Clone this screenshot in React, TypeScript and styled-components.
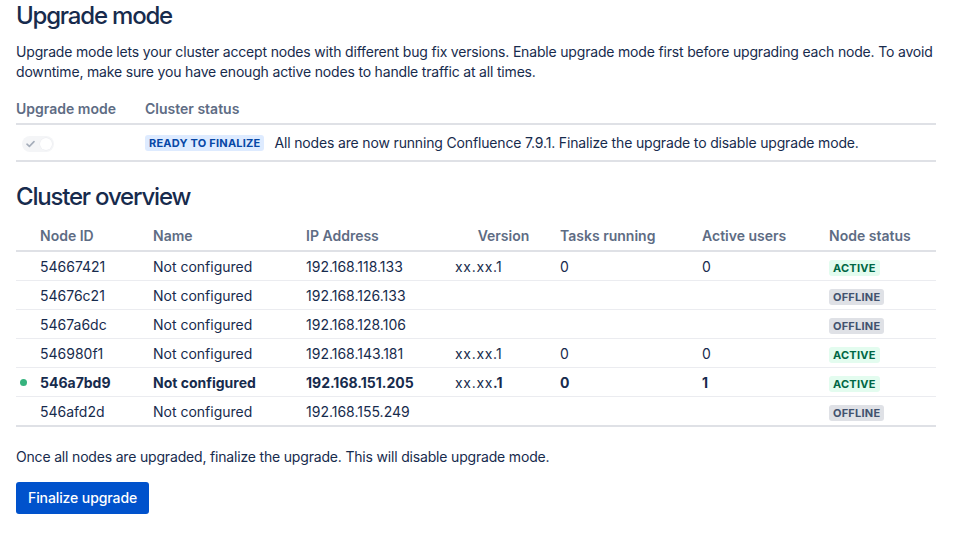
import React from "react";
import styled, { createGlobalStyle } from "styled-components";

const GlobalStyle = createGlobalStyle`
  html, body { margin: 0; padding: 0; background: #ffffff; }
  body {
    font-family: Inter, "Noto Sans", "Liberation Sans", sans-serif;
    color: #172B4D;
    font-size: 14px;
    line-height: 20px;
    -webkit-font-smoothing: antialiased;
  }
`;

const Page = styled.div`
  padding: 2px 16px 0 16px;
`;

const Heading = styled.h1<{ $top?: number }>`
  margin: ${(p) => p.$top ?? 0}px 0 0 0;
  font-size: 24px;
  line-height: 28px;
  font-weight: 500;
  color: #172B4D;
  letter-spacing: -1.2px;
`;

const Paragraph = styled.p<{ $top: number }>`
  margin: ${(p) => p.$top}px 0 0 0;
  font-size: 14px;
  line-height: 20px;
  letter-spacing: -0.18px;
`;

const ModeTable = styled.div`
  width: 920px;
  margin-top: 13px;
  border-bottom: 2px solid #DFE1E6;
`;

const ModeRow = styled.div<{ $head?: boolean }>`
  display: grid;
  grid-template-columns: 129px 1fr;
  align-items: center;
  padding: ${(p) => (p.$head ? "4px 0 4px" : "8px 0 7px")};
  border-bottom: ${(p) => (p.$head ? "2px solid #DFE1E6" : "none")};
`;

const HeadCell = styled.div<{ $align?: string; $pl?: number }>`
  font-weight: 600;
  color: #5E6C84;
  text-align: ${(p) => p.$align ?? "left"};
  padding-left: ${(p) => p.$pl ?? 0}px;
  white-space: nowrap;
`;

const StatusCell = styled.div`
  display: flex;
  align-items: center;
  gap: 10px;
  white-space: nowrap;
`;

const StatusText = styled.span`
  letter-spacing: -0.16px;
`;

const Toggle = styled.span`
  position: relative;
  display: inline-flex;
  align-items: center;
  width: 32px;
  height: 16px;
  margin-left: 6px;
  border-radius: 8px;
  background: #F4F5F7;
  box-sizing: border-box;
`;

const Knob = styled.span`
  position: absolute;
  right: 2px;
  top: 2px;
  width: 12px;
  height: 12px;
  border-radius: 50%;
  background: #ffffff;
  box-shadow: 0 0 0 0.5px #EBECF0;
`;

const CheckIcon = styled.svg`
  margin-left: 4px;
`;

const Lozenge = styled.span<{ $tone: "blue" | "green" | "grey" }>`
  display: inline-block;
  padding: 0 4px;
  border-radius: 3px;
  font-size: 11px;
  line-height: 16px;
  font-weight: 700;
  text-transform: uppercase;
  letter-spacing: 0.02em;
  background: ${(p) =>
    p.$tone === "blue" ? "#DEEBFF" : p.$tone === "green" ? "#E3FCEF" : "#DFE1E6"};
  color: ${(p) =>
    p.$tone === "blue" ? "#0747A6" : p.$tone === "green" ? "#006644" : "#42526E"};
`;

const NodeTable = styled.div`
  width: 920px;
  margin-top: 11px;
  border-bottom: 2px solid #DFE1E6;
`;

const COLS = "129px 153px 149px 105px 142px 127px 115px";

const NodeHeadRow = styled.div`
  display: grid;
  grid-template-columns: ${COLS};
  padding: 4px 0 4px;
  border-bottom: 2px solid #DFE1E6;
`;

const NodeRow = styled.div<{ $bold?: boolean }>`
  display: grid;
  grid-template-columns: ${COLS};
  align-items: center;
  height: 29px;
  padding-top: 1px;
  box-sizing: border-box;
  font-weight: ${(p) => (p.$bold ? 700 : 400)};
  border-bottom: 1px solid #EBECF0;
  &:last-child { border-bottom: none; height: 28px; }
`;

const Cell = styled.div<{ $pl?: number }>`
  position: relative;
  padding-left: ${(p) => p.$pl ?? 8}px;
  white-space: nowrap;
`;

const Dot = styled.span`
  position: absolute;
  left: 4px;
  top: 50%;
  margin-top: -3.5px;
  width: 7px;
  height: 7px;
  border-radius: 50%;
  background: #36B37E;
`;

const Placeholder = styled.span`
  font-weight: 400;
  letter-spacing: 0.05em;
`;

const Button = styled.button`
  margin-top: 15px;
  height: 32px;
  padding: 0 12px;
  border: none;
  border-radius: 3px;
  background: #0052CC;
  color: #ffffff;
  font-family: Inter, "Noto Sans", "Liberation Sans", sans-serif;
  font-size: 14px;
  font-weight: 500;
  line-height: 32px;
  letter-spacing: -0.1px;
  cursor: pointer;
`;

type Node = {
  id: string;
  ip: string;
  version?: boolean;
  tasks?: string;
  users?: string;
  status: "active" | "offline";
  current?: boolean;
};

const nodes: Node[] = [
  { id: "54667421", ip: "192.168.118.133", version: true, tasks: "0", users: "0", status: "active" },
  { id: "54676c21", ip: "192.168.126.133", status: "offline" },
  { id: "5467a6dc", ip: "192.168.128.106", status: "offline" },
  { id: "546980f1", ip: "192.168.143.181", version: true, tasks: "0", users: "0", status: "active" },
  { id: "546a7bd9", ip: "192.168.151.205", version: true, tasks: "0", users: "1", status: "active", current: true },
  { id: "546afd2d", ip: "192.168.155.249", status: "offline" },
];

export default function App() {
  return (
    <>
      <GlobalStyle />
      <Page>
        <Heading>Upgrade mode</Heading>
        <Paragraph $top={12}>
          Upgrade mode lets your cluster accept nodes with different bug fix versions. Enable upgrade
          mode first before upgrading each node. To avoid downtime, make sure you have enough active
          nodes to handle traffic at all times.
        </Paragraph>

        <ModeTable>
          <ModeRow $head>
            <HeadCell>Upgrade mode</HeadCell>
            <HeadCell>Cluster status</HeadCell>
          </ModeRow>
          <ModeRow>
            <div>
              <Toggle>
                <CheckIcon width="9" height="8" viewBox="0 0 9 8">
                  <path d="M1 4.2 L3.4 6.4 L8 1.6" fill="none" stroke="#A5ADBA" strokeWidth="1.6" strokeLinecap="round" strokeLinejoin="round" />
                </CheckIcon>
                <Knob />
              </Toggle>
            </div>
            <StatusCell>
              <Lozenge $tone="blue">Ready to finalize</Lozenge>
              <StatusText>All nodes are now running Confluence 7.9.1. Finalize the upgrade to disable upgrade mode.</StatusText>
            </StatusCell>
          </ModeRow>
        </ModeTable>

        <Heading $top={21}>Cluster overview</Heading>

        <NodeTable>
          <NodeHeadRow>
            <HeadCell $pl={24}>Node ID</HeadCell>
            <HeadCell $pl={8}>Name</HeadCell>
            <HeadCell $pl={8}>IP Address</HeadCell>
            <HeadCell $align="center" $pl={8}>Version</HeadCell>
            <HeadCell $pl={8}>Tasks running</HeadCell>
            <HeadCell $pl={8}>Active users</HeadCell>
            <HeadCell $pl={8}>Node status</HeadCell>
          </NodeHeadRow>
          {nodes.map((n) => (
            <NodeRow key={n.id} $bold={n.current}>
              <Cell $pl={24}>
                {n.current && <Dot />}
                {n.id}
              </Cell>
              <Cell>Not configured</Cell>
              <Cell>{n.ip}</Cell>
              <Cell>
                {n.version && (
                  <>
                    <Placeholder>xx.xx</Placeholder>.1
                  </>
                )}
              </Cell>
              <Cell>{n.tasks}</Cell>
              <Cell>{n.users}</Cell>
              <Cell>
                <Lozenge $tone={n.status === "active" ? "green" : "grey"}>{n.status}</Lozenge>
              </Cell>
            </NodeRow>
          ))}
        </NodeTable>

        <Paragraph $top={20}>
          Once all nodes are upgraded, finalize the upgrade. This will disable upgrade mode.
        </Paragraph>
        <Button>Finalize upgrade</Button>
      </Page>
    </>
  );
}
